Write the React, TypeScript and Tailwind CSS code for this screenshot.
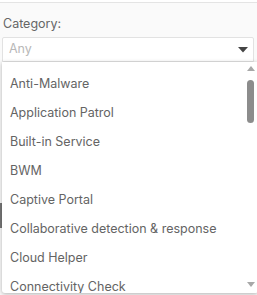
import { useState } from 'react'

const items = [
  'Anti-Malware',
  'Application Patrol',
  'Built-in Service',
  'BWM',
  'Captive Portal',
  'Collaborative detection & response',
  'Cloud Helper',
  'Connectivity Check',
]

export default function App() {
  const [selected, setSelected] = useState('')

  return (
    <div className="relative w-[257px] h-[295px] overflow-hidden bg-[#fafafa] font-['Inter',sans-serif]">
      <div className="h-[3px] border-b border-[#e4e4e4] bg-white" />
      {/* bits of the page behind the open list */}
      <div className="absolute right-0 top-[88px] w-px h-[22px] bg-[#4caf28]" />
      <div className="absolute left-0 top-[203px] w-[2px] h-[25px] bg-[#777]" />

      <div className="px-[2px] pt-[13px]">
        <label className="block pl-[1px] text-[12.5px] leading-[16px] text-[#666] mb-[5px]">Category:</label>
        <div className="flex items-center h-[25px] bg-white border border-[#e2e2e2] rounded-t-[2px] pl-[6px] pr-[5px] w-[252px]">
          <span className="flex-1 text-[12.5px] text-[#b8b8b8]">{selected || 'Any'}</span>
          <svg width="10" height="6" viewBox="0 0 10 6"><path d="M0 0h10L5 5.5z" fill="#444" /></svg>
        </div>

        <div className="relative w-[256px] h-[231px] bg-white rounded-b-[3px] shadow-[0_1px_4px_rgba(0,0,0,0.3)] overflow-hidden">
          <ul className="pt-[8px]">
            {items.map(item => (
              <li key={item} onClick={() => setSelected(item)}
                className="h-[29px] flex items-center pl-[8px] text-[12.5px] text-[#646464] cursor-pointer">
                {item}
              </li>
            ))}
          </ul>
          <div className="absolute right-[3px] top-[4px] bottom-[6px] w-[9px] flex flex-col items-center">
            <svg width="8" height="5" viewBox="0 0 8 5"><path d="M0 5h8L4 0z" fill="#a8a8a8" /></svg>
            <div className="mt-[9px] w-[7px] h-[43px] rounded-full bg-[#8c8c8c]" />
            <div className="flex-1" />
            <svg width="8" height="5" viewBox="0 0 8 5"><path d="M0 0h8L4 5z" fill="#a8a8a8" /></svg>
          </div>
        </div>
      </div>
    </div>
  )
}
